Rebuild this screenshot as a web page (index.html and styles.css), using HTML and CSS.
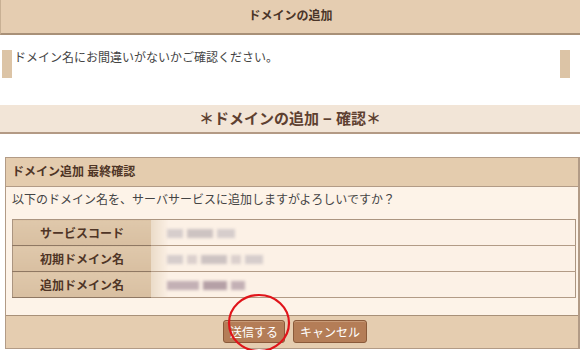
FILE: index.html
```html
<!DOCTYPE html>
<html lang="ja">
<head>
    <meta charset="UTF-8">
    <title>ドメインの追加</title>
    <link rel="stylesheet" href="styles.css">
</head>
<body>
    <div class="page-head">ドメインの追加</div>

    <div class="notice">
        <span class="notice-mark"></span>
        <p class="notice-text">ドメイン名にお間違いがないかご確認ください。</p>
        <span class="notice-mark notice-mark-right"></span>
    </div>

    <div class="sub-head">＊ドメインの追加 − 確認＊</div>

    <div class="box">
        <div class="box-head">ドメイン追加 最終確認</div>
        <div class="box-body">
            <p class="lead">以下のドメイン名を、サーバサービスに追加しますがよろしいですか？</p>
            <table class="info">
                <tr>
                    <th>サービスコード</th>
                    <td><span class="blur b1"></span><span class="blur b2"></span><span class="blur b3"></span></td>
                </tr>
                <tr>
                    <th>初期ドメイン名</th>
                    <td><span class="blur b1"></span><span class="blur b4"></span><span class="blur b2"></span><span class="blur b4"></span><span class="blur b3"></span></td>
                </tr>
                <tr>
                    <th>追加ドメイン名</th>
                    <td><span class="blur b5"></span><span class="blur b6"></span><span class="blur b5 short"></span></td>
                </tr>
            </table>
        </div>
        <div class="box-foot">
            <button class="btn">送信する</button>
            <button class="btn">キャンセル</button>
        </div>
    </div>

    <svg class="mark" width="66" height="62" viewBox="0 0 66 62">
        <ellipse cx="33" cy="31" rx="30" ry="28" fill="none" stroke="#e0141a" stroke-width="2.2"/>
    </svg>
</body>
</html>
```

FILE: styles.css
```css
body {
    margin: 0;
    font-family: "Liberation Sans", "Noto Sans CJK JP", sans-serif;
    font-size: 12px;
    color: #3a3a3a;
    background: #fff;
    position: relative;
    width: 580px;
    height: 350px;
    overflow: hidden;
}
p {
    margin: 0;
}
.page-head {
    height: 33px;
    line-height: 33px;
    text-align: center;
    font-weight: bold;
    color: #4a3528;
    background: #e5cdb1;
    border-bottom: 2px solid #a89078;
    border-left: 1px solid #c8b094;
}
.notice {
    display: flex;
    align-items: flex-start;
    height: 70px;
    padding-top: 15px;
    box-sizing: border-box;
}
.notice-mark {
    width: 10px;
    height: 28px;
    margin-left: 2px;
    background: #dcc4a6;
}
.notice-mark-right {
    margin-left: auto;
    margin-right: 10px;
}
.notice-text {
    margin-left: 2px;
    line-height: 16px;
    color: #444;
}
.sub-head {
    height: 27px;
    line-height: 27px;
    text-align: center;
    font-size: 15px;
    font-weight: bold;
    color: #5e4030;
    background: #f2e5d7;
    border-bottom: 2px solid #b39a85;
}
.box {
    margin: 23px 0 0 5px;
    border: 1px solid #b29b86;
    border-right-width: 2px;
}
.box-head {
    height: 28px;
    line-height: 28px;
    padding-left: 6px;
    font-weight: bold;
    color: #4f3526;
    background: #e4ccae;
    border-bottom: 1px solid #b29b86;
}
.box-body {
    background: #fdf3e8;
    padding: 4px 4px 17px 6px;
}
.lead {
    line-height: 18px;
    color: #444;
    margin-bottom: 10px;
}
.info {
    width: 564px;
    border-collapse: collapse;
    border: 1px solid #ab9580;
}
.info th {
    width: 138px;
    height: 25px;
    padding: 0;
    font-size: 12px;
    color: #4f3526;
    background: linear-gradient(#dfc8ab, #d8bfa1);
    border-bottom: 1px solid #8f7863;
}
.info td {
    height: 25px;
    padding: 0 0 0 16px;
    background: linear-gradient(to right, #eadbc8, #fcf1e6 18px);
    border-bottom: 1px solid #b29b86;
}
.blur {
    display: inline-block;
    height: 9px;
    margin-right: 4px;
    background: #d6cdcc;
    filter: blur(1.5px);
    vertical-align: middle;
}
.b1 { width: 16px; }
.b2 { width: 26px; background: #cdc3c2; }
.b3 { width: 18px; }
.b4 { width: 10px; background: #dbd0cd; }
.b5 { width: 32px; background: #c3b0b5; }
.b6 { width: 24px; background: #b5a0a6; }
.short { width: 14px; }
.box-foot {
    display: flex;
    justify-content: center;
    gap: 8px;
    padding: 4px 0 5px 6px;
    background: #e5cdb0;
    border-top: 1px solid #a89078;
}
.btn {
    height: 23px;
    padding: 0 6px;
    font-family: "Liberation Sans", "Noto Sans CJK JP", sans-serif;
    font-size: 12px;
    color: #fff;
    background: #b47d57;
    border: 1px solid #8a5a3a;
    border-radius: 3px;
    box-shadow: inset 0 1px 0 #c89a77;
}
.mark {
    position: absolute;
    left: 226px;
    top: 292px;
}
```
